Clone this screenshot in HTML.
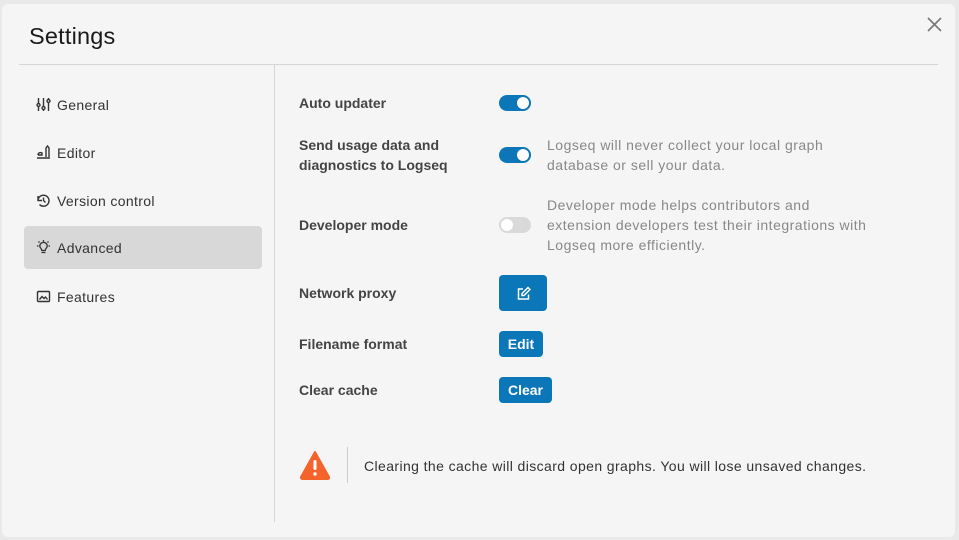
<!DOCTYPE html>
<html><head><style>
*{margin:0;padding:0;box-sizing:border-box}
body{width:959px;height:540px;background:#e9e9e9;font-family:"Liberation Sans",sans-serif;position:relative;overflow:hidden}
.panel{position:absolute;left:2px;top:4px;width:953px;height:533px;background:#f5f5f5;border-radius:6px}
.abs{position:absolute}
h1{position:absolute;left:29px;top:23px;font-size:23.5px;font-weight:500;color:#1a1a1a;letter-spacing:0.2px}
.hr{position:absolute;left:19px;top:64px;width:919px;height:1px;background:#d6d6d6}
.vr{position:absolute;left:274px;top:65px;width:1px;height:457px;background:#d6d6d6}
.nav{position:absolute;left:24px;width:238px;height:43px;border-radius:4px;font-size:14px;color:#333;display:flex;align-items:center;padding-left:12px;letter-spacing:0.35px}
.nav svg{margin-right:6px}
.sel{background:#d8d8d8}
.lbl{position:absolute;left:299px;font-size:14px;font-weight:bold;color:#444;line-height:20px}
.desc{position:absolute;left:547px;font-size:14px;color:#888;line-height:20px;letter-spacing:0.5px}
.tog{position:absolute;left:499px;width:32px;height:16px;border-radius:8px;background:#0b76b8}
.tog i{position:absolute;top:2px;right:2px;width:12px;height:12px;border-radius:6px;background:#fff}
.tog.off{background:#d9d9d9}.tog.off i{left:2px;right:auto}
.btn{position:absolute;left:499px;background:#0b76b8;color:#fff;border-radius:4px;font-size:14px;font-weight:bold;display:flex;align-items:center;justify-content:center}
</style></head><body>
<div class="panel"></div>
<h1>Settings</h1>
<svg class="abs" style="left:927px;top:17px" width="15" height="15" viewBox="0 0 15 15"><path d="M1 1L14 14M14 1L1 14" stroke="#777" stroke-width="1.6"/></svg>
<div class="hr"></div><div class="vr"></div>

<div class="nav" style="top:83px"><svg width="15" height="15" viewBox="0 0 15 15" fill="none" stroke="#333" stroke-width="1.4"><path d="M2.5 1v13M7.5 1v13M12.5 1v13"/><circle cx="2.5" cy="8" r="1.5" fill="#f5f5f5"/><circle cx="7.5" cy="11" r="1.5" fill="#f5f5f5"/><circle cx="12.5" cy="4" r="1.5" fill="#f5f5f5"/></svg>General</div>
<div class="nav" style="top:131px"><svg width="15" height="15" viewBox="0 0 15 15" fill="none" stroke="#333" stroke-width="1.4"><path d="M1 13h13M2 10c0-2 2-3 4-2v2H2M10 12V3l1.5-2 1.5 2v9"/></svg>Editor</div>
<div class="nav" style="top:179px"><svg width="15" height="15" viewBox="0 0 15 15" fill="none" stroke="#333" stroke-width="1.4"><path d="M2 7.5a5.5 5.5 0 1 1 1.5 4M2 3v4.5h4M7.5 4.5v3l2 2"/></svg>Version control</div>
<div class="nav sel" style="top:226px"><svg width="15" height="15" viewBox="0 0 15 15" fill="none" stroke="#333" stroke-width="1.3"><path d="M5.5 12.5h4M5.8 10.5c0-2-2-2.5-2-4.5a3.7 3.7 0 0 1 7.4 0c0 2-2 2.5-2 4.5zM7.5 0v1.5M1 6h1.5M12.5 6H14M2.5 1.5l1 1M12.5 1.5l-1 1"/></svg>Advanced</div>
<div class="nav" style="top:275px"><svg width="15" height="15" viewBox="0 0 15 15" fill="none" stroke="#333" stroke-width="1.4"><rect x="1.5" y="2.5" width="12" height="10" rx="1"/><path d="M3.5 10.5l2.5-3 2 2 1.5-1.5 2 2.5"/></svg>Features</div>

<div class="lbl" style="top:93px">Auto updater</div>
<div class="tog" style="top:95px"><i></i></div>
<div class="lbl" style="top:135px">Send usage data and<br>diagnostics to Logseq</div>
<div class="tog" style="top:147px"><i></i></div>
<div class="desc" style="top:135px">Logseq will never collect your local graph<br>database or sell your data.</div>
<div class="lbl" style="top:215px">Developer mode</div>
<div class="tog off" style="top:217px"><i></i></div>
<div class="desc" style="top:195px">Developer mode helps contributors and<br>extension developers test their integrations with<br>Logseq more efficiently.</div>
<div class="lbl" style="top:283px">Network proxy</div>
<div class="btn" style="top:275px;width:48px;height:36px"><svg width="15" height="15" viewBox="0 0 15 15" fill="none" stroke="#fff" stroke-width="1.5"><path d="M7 3H2.5v10h10V8.5M6 9.5V7.5l6-6 2 2-6 6z"/></svg></div>
<div class="lbl" style="top:334px">Filename format</div>
<div class="btn" style="top:331px;width:44px;height:26px">Edit</div>
<div class="lbl" style="top:380px">Clear cache</div>
<div class="btn" style="top:377px;width:53px;height:26px">Clear</div>

<svg class="abs" style="left:299px;top:450px" width="32" height="30" viewBox="0 0 32 30"><path d="M16 2L30 27a1.5 1.5 0 0 1-1.3 2H3.3A1.5 1.5 0 0 1 2 27z" fill="#f4632c" stroke="#f4632c" stroke-width="2" stroke-linejoin="round"/><rect x="14.5" y="10" width="3" height="10" rx="1.5" fill="#fff"/><circle cx="16" cy="24" r="1.7" fill="#fff"/></svg>
<div class="abs" style="left:347px;top:447px;width:1px;height:36px;background:#ccc"></div>
<div class="abs" style="left:364px;top:456px;font-size:14px;color:#333;line-height:20px;letter-spacing:0.4px">Clearing the cache will discard open graphs. You will lose unsaved changes.</div>
</body></html>
